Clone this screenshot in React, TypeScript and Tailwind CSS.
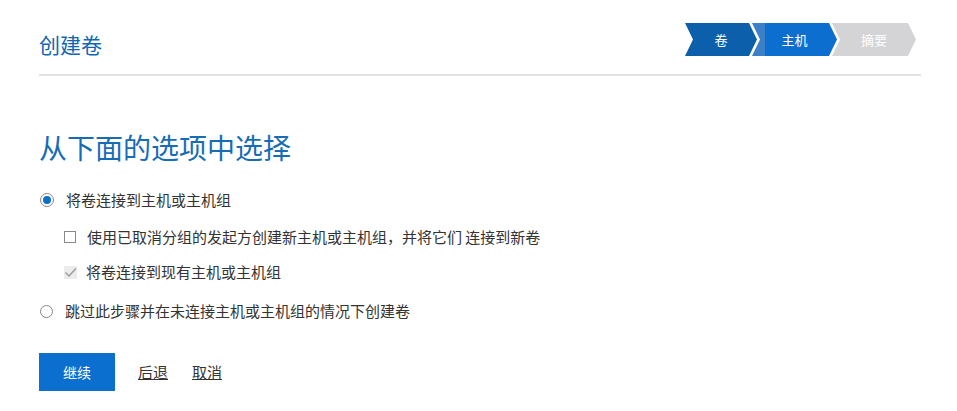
import React from "react";

const font = { fontFamily: '"Noto Sans CJK SC", "Noto Sans", sans-serif' };

function Steps() {
  return (
    <div className="flex mt-[23px] mr-[5px] h-[33px] text-[13px] text-white">
      <div className="w-[72px] h-full flex items-center justify-center bg-[#0b5fab] [clip-path:polygon(0_0,64px_0,100%_50%,64px_100%,0_100%,8px_50%)]">
        卷
      </div>
      <div className="w-[85px] -ml-[5px] h-full flex items-center justify-center bg-[linear-gradient(to_right,#3c80c9_13px,#0c6fcf_13px)] [clip-path:polygon(0_0,77px_0,100%_50%,77px_100%,0_100%,8px_50%)]">
        主机
      </div>
      <div className="w-[84px] -ml-[5px] h-full flex items-center justify-center bg-[#d4d4d7] [clip-path:polygon(0_0,76px_0,100%_50%,76px_100%,0_100%,8px_50%)]">
        摘要
      </div>
    </div>
  );
}

export default function App() {
  return (
    <div className="w-[957px] h-[411px] bg-white pl-[39px] pr-[36px] text-[#333333]" style={font}>
      <div className="h-[74px] flex justify-between items-start">
        <div className="mt-[30px] text-[21px] leading-[28px] text-[#0f66b5]">创建卷</div>
        <Steps />
      </div>
      <div className="h-[2px] bg-[#e2e2e2]" />

      <div className="mt-[53px] text-[28px] leading-[36px] text-[#176cb6]">从下面的选项中选择</div>

      <div className="mt-[25px] h-[20px] flex items-center text-[15px]">
        <div className="ml-[1px] w-[14px] h-[14px] rounded-full border border-[#8a8a8a] flex items-center justify-center">
          <div className="w-[8px] h-[8px] rounded-full bg-[#0b6fcf]" />
        </div>
        <span className="ml-[12px]">将卷连接到主机或主机组</span>
      </div>

      <div className="mt-[17px] h-[20px] flex items-center text-[15px] pl-[25px]">
        <div className="w-[12px] h-[12px] border border-[#8a8a8a] bg-white" />
        <span className="ml-[11px]">使用已取消分组的发起方创建新主机或主机组，并将它们 连接到新卷</span>
      </div>

      <div className="mt-[15px] h-[20px] flex items-center text-[15px] pl-[25px]">
        <svg width="13" height="13" viewBox="0 0 13 13">
          <rect x="0" y="0" width="13" height="13" fill="#ececec" />
          <path d="M1.5 6.5 L5 10 L12 2.5" stroke="#9b9b9b" strokeWidth="1.4" fill="none" />
        </svg>
        <span className="ml-[9px]">将卷连接到现有主机或主机组</span>
      </div>

      <div className="mt-[19px] h-[20px] flex items-center text-[15px]">
        <div className="ml-[1px] w-[13px] h-[13px] rounded-full border border-[#8a8a8a]" />
        <span className="ml-[12px]">跳过此步骤并在未连接主机或主机组的情况下创建卷</span>
      </div>

      <div className="mt-[32px] flex items-center text-[15px]">
        <button className="w-[76px] h-[38px] bg-[#0b6fcf] text-white text-[14px]">继续</button>
        <a className="ml-[23px] underline text-[#333333]">后退</a>
        <a className="ml-[24px] underline text-[#333333]">取消</a>
      </div>
    </div>
  );
}
